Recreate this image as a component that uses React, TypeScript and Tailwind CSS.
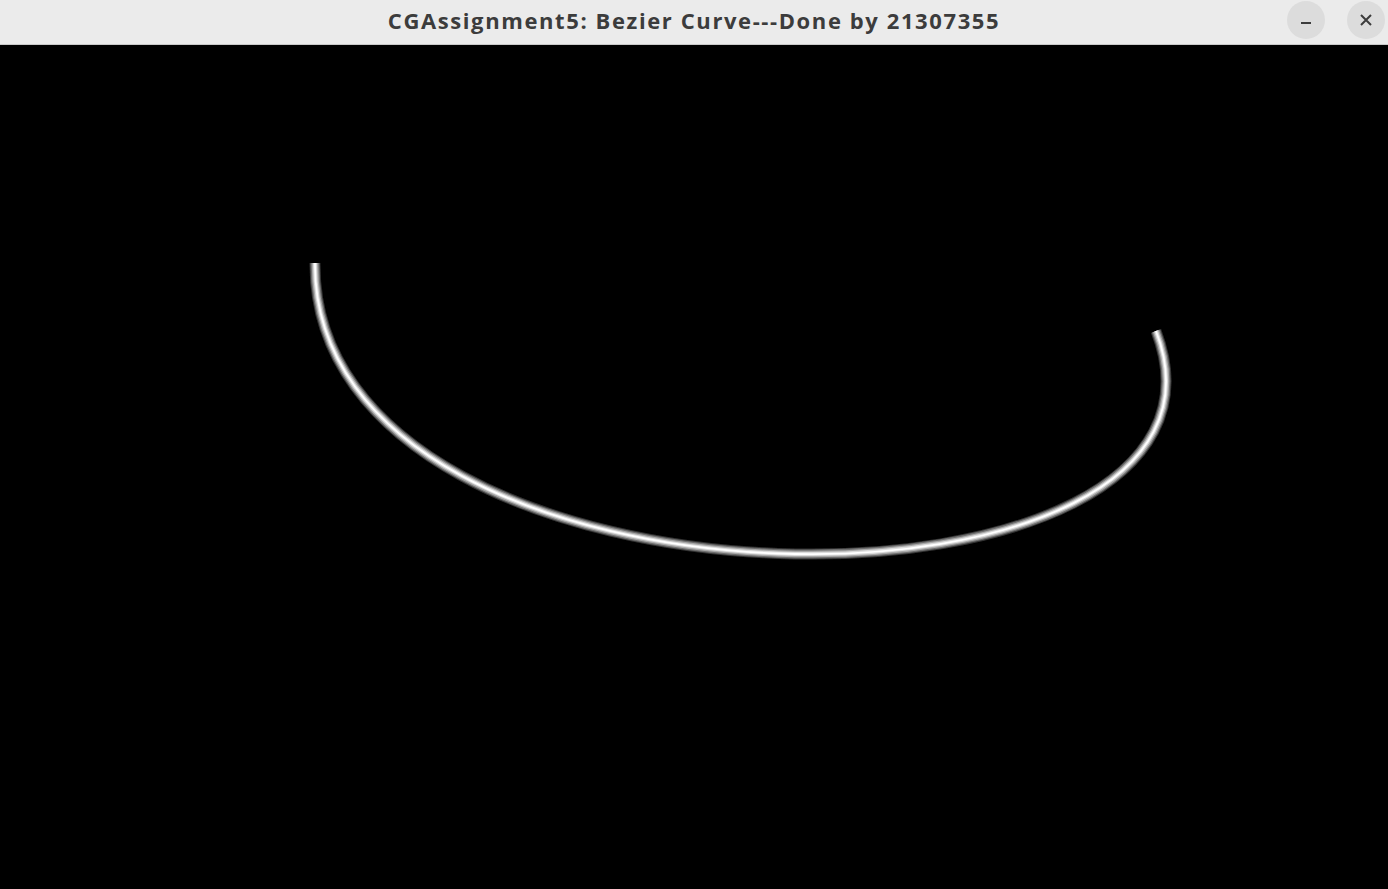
import React from 'react';

// control points of the cubic curve, in window coordinates
const P0 = [315, 263];
const P1 = [312, 640];
const P2 = [1274, 638];
const P3 = [1156, 331];

const curvePath = `M ${P0[0]} ${P0[1]} C ${P1[0]} ${P1[1]}, ${P2[0]} ${P2[1]}, ${P3[0]} ${P3[1]}`;

const TitleBar: React.FC = () => (
  <div className="relative flex h-[45px] items-center justify-center border-b border-[#c9c9c9] bg-[#ebebeb]">
    <span
      className="-mt-[3px] text-[22px] font-bold tracking-[1.6px] text-[#3c3c3c]"
      style={{ fontFamily: '"Open Sans", "Noto Sans", sans-serif' }}
    >
      CGAssignment5: Bezier Curve---Done by 21307355
    </span>
    <div className="absolute right-[3px] top-[1px] flex items-center gap-[22px]">
      <button className="flex h-[38px] w-[38px] items-center justify-center rounded-full bg-[#dcdcdc]">
        <svg width="14" height="14" viewBox="0 0 14 14">
          <line x1="2" y1="10" x2="12" y2="10" stroke="#3c3c3c" strokeWidth="2" />
        </svg>
      </button>
      <button className="flex h-[38px] w-[38px] items-center justify-center rounded-full bg-[#dcdcdc]">
        <svg width="14" height="14" viewBox="0 0 14 14">
          <path d="M2 2 L12 12 M12 2 L2 12" stroke="#3c3c3c" strokeWidth="2" />
        </svg>
      </button>
    </div>
  </div>
);

export default function App() {
  return (
    <div className="flex h-[889px] w-[1388px] flex-col overflow-hidden bg-black">
      <TitleBar />
      <div className="flex-1 bg-black">
        <svg width="1388" height="844" viewBox="0 45 1388 844" className="block">
          <defs>
            <filter id="soft" x="-5%" y="-5%" width="110%" height="110%">
              <feGaussianBlur stdDeviation="0.7" />
            </filter>
          </defs>
          <g fill="none" strokeLinecap="butt" filter="url(#soft)">
            <path d={curvePath} stroke="#333333" strokeWidth="11" />
            <path d={curvePath} stroke="#6e6e6e" strokeWidth="9" />
            <path d={curvePath} stroke="#a8a8a8" strokeWidth="6.5" />
            <path d={curvePath} stroke="#dcdcdc" strokeWidth="4" />
            <path d={curvePath} stroke="#ffffff" strokeWidth="1.8" />
          </g>
        </svg>
      </div>
    </div>
  );
}
